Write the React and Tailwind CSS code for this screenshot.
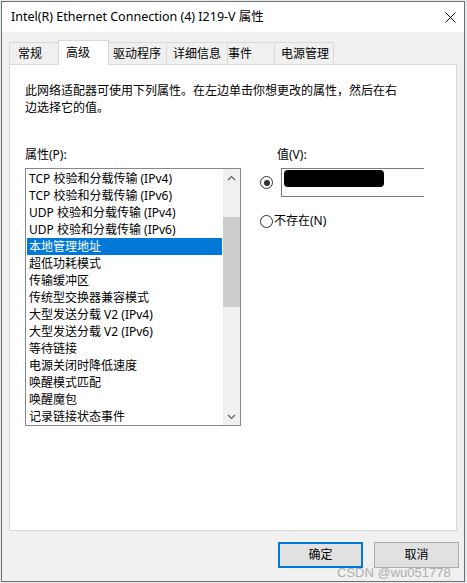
import React from 'react';

const tabs = [
    { label: '常规', w: 'w-[50px]', pl: 'pl-[8px]' },
    { label: '高级', w: 'w-[51px]', pl: 'pl-[7px]', active: true },
    { label: '驱动程序', w: 'w-[59px]', pl: 'pl-[4px]' },
    { label: '详细信息', w: 'w-[62px]', pl: 'pl-[6px]' },
    { label: '事件', w: 'w-[48px]', pl: 'pl-[0px]' },
    { label: '电源管理', w: 'w-[60px]', pl: 'pl-[6px]' },
];

const items = [
    'TCP 校验和分载传输 (IPv4)',
    'TCP 校验和分载传输 (IPv6)',
    'UDP 校验和分载传输 (IPv4)',
    'UDP 校验和分载传输 (IPv6)',
    '本地管理地址',
    '超低功耗模式',
    '传输缓冲区',
    '传统型交换器兼容模式',
    '大型发送分载 V2 (IPv4)',
    '大型发送分载 V2 (IPv6)',
    '等待链接',
    '电源关闭时降低速度',
    '唤醒模式匹配',
    '唤醒魔包',
    '记录链接状态事件',
];

const Chevron = ({ up }) => (
    <svg width="9" height="6" viewBox="0 0 9 6" className="block">
        <path
            d={up ? 'M1 5 L4.5 1.5 L8 5' : 'M1 1 L4.5 4.5 L8 1'}
            fill="none"
            stroke="#606060"
            strokeWidth="1.2"
        />
    </svg>
);

const Radio = ({ checked }) => (
    <span className="w-[13px] h-[13px] rounded-full border border-[#333333] bg-white flex items-center justify-center shrink-0">
        {checked && <span className="w-[6px] h-[6px] rounded-full bg-[#333333]" />}
    </span>
);

const App = () => {
    return (
        <div className="relative w-[467px] h-[583px] bg-[#e6ebf0] pt-[1px] pl-[1px] overflow-hidden font-['Noto_Sans','Noto_Sans_CJK_SC',sans-serif] text-[12px] text-black">
            <div className="w-[464px] h-[581px] border border-[#707070] bg-[#f0f0f0] flex flex-col">
                {/* 标题栏 */}
                <div className="h-[30px] bg-white flex items-center justify-between pl-[9px] pr-[8px]">
                    <span className="text-[12.5px]">Intel(R) Ethernet Connection (4) I219-V 属性</span>
                    <svg width="11" height="11" viewBox="0 0 11 11">
                        <path d="M0.5 0.5 L10.5 10.5 M10.5 0.5 L0.5 10.5" stroke="#111" strokeWidth="1" />
                    </svg>
                </div>

                {/* 选项卡 */}
                <div className="mt-[8px] pl-[7px] flex items-end relative z-10">
                    {tabs.map((t, i) => (
                        <div
                            key={t.label}
                            className={
                                `${t.w} ${t.pl} ${i > 0 ? '-ml-px' : ''} flex items-center border border-b-0 border-[#d9d9d9] ` +
                                (t.active ? 'h-[25px] bg-white -mb-px relative z-10' : 'h-[22px] bg-[#f0f0f0]')
                            }
                        >
                            {t.label}
                        </div>
                    ))}
                </div>

                {/* 内容 */}
                <div className="mx-[7px] h-[467px] border border-[#d9d9d9] bg-white pl-[15px] pt-[17px]">
                    <p className="leading-[17px]">
                        此网络适配器可使用下列属性。在左边单击你想更改的属性，然后在右
                        <br />
                        边选择它的值。
                    </p>

                    <div className="mt-[30px] flex">
                        <div className="w-[216px] shrink-0">
                            <div className="leading-[17px]">属性(P):</div>
                            <div className="mt-[5px] h-[258px] border border-[#828790] flex">
                                <div className="flex-1 pt-[1px] px-[1px]">
                                    {items.map((it) => (
                                        <div
                                            key={it}
                                            className={
                                                'h-[17px] leading-[17px] pl-[2px] whitespace-nowrap ' +
                                                (it === '本地管理地址' ? 'bg-[#0078d7] text-white' : '')
                                            }
                                        >
                                            {it}
                                        </div>
                                    ))}
                                </div>
                                <div className="w-[17px] bg-[#f0f0f0] flex flex-col">
                                    <div className="h-[17px] flex items-center justify-center">
                                        <Chevron up />
                                    </div>
                                    <div className="mt-[31px] h-[90px] bg-[#cdcdcd]" />
                                    <div className="mt-auto h-[17px] flex items-center justify-center">
                                        <Chevron />
                                    </div>
                                </div>
                            </div>
                        </div>

                        <div className="ml-[19px] flex-1">
                            <div className="pl-[17px] leading-[17px]">值(V):</div>
                            <div className="mt-[5px] flex items-center">
                                <Radio checked />
                                <div className="ml-[8px] w-[143px] h-[29px] border border-r-0 border-[#7a7a7a] pl-[2px] pt-[1px]">
                                    <div className="w-[100px] h-[17px] rounded-[4px] bg-black" />
                                </div>
                            </div>
                            <div className="mt-[16px] flex items-center h-[16px]">
                                <Radio />
                                <span className="ml-[1px] leading-[16px]">不存在(N)</span>
                            </div>
                        </div>
                    </div>
                </div>

                {/* 按钮 */}
                <div className="mt-[11px] flex justify-end gap-[11px] pr-[5px]">
                    <button className="w-[85px] h-[26px] border-2 border-[#0078d7] bg-[#e1e1e1] text-[12px]">确定</button>
                    <button className="w-[85px] h-[26px] border border-[#adadad] bg-[#e1e1e1] text-[12px]">取消</button>
                </div>
            </div>

            <span className="absolute left-[337px] top-[563px] text-[13px] text-[#a8a8a8] opacity-90 font-['Liberation_Sans',sans-serif]">
                CSDN @wu051778
            </span>
        </div>
    );
};

export default App;
